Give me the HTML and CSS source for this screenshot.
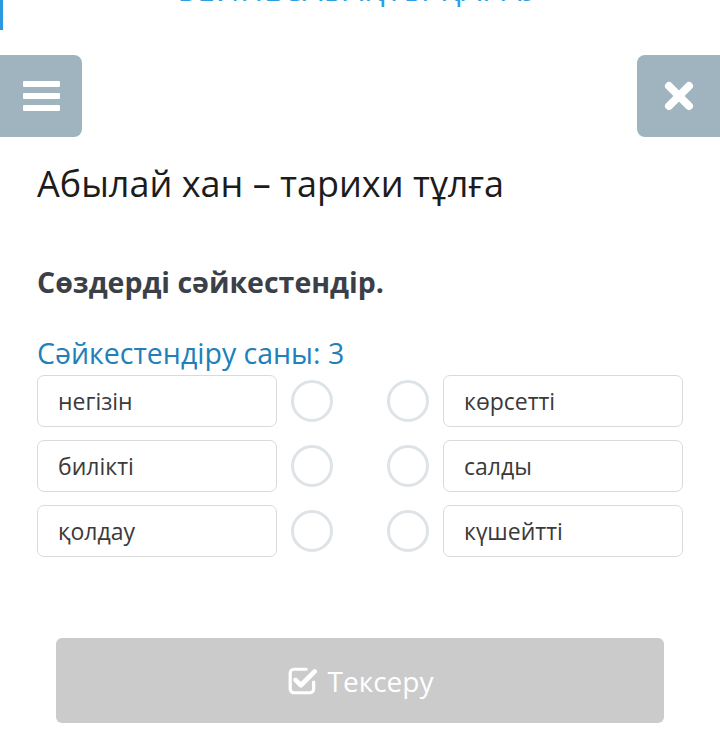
FILE: index.html
```html
<!DOCTYPE html>
<html lang="kk">
<head>
<meta charset="utf-8">
<title>Абылай хан – тарихи тұлға</title>
<link rel="stylesheet" href="styles.css">
</head>
<body>
<div class="peek">
  <div class="peek-bar"></div>
  <div class="peek-text">БЕЙНЕСАБАҚТЫ ҚАРАУ</div>
</div>
<div class="toolbar">
  <button class="tool-btn menu-btn" aria-label="Мәзір">
    <span class="bar"></span><span class="bar"></span><span class="bar"></span>
  </button>
  <button class="tool-btn close-btn" aria-label="Жабу">
    <svg width="32" height="32" viewBox="0 0 32 32"><path d="M6 6 L26 26 M26 6 L6 26" stroke="#fff" stroke-width="8" stroke-linecap="round"/></svg>
  </button>
</div>
<main class="content">
  <h1 class="title">Абылай хан – тарихи тұлға</h1>
  <h2 class="task">Сөздерді сәйкестендір.</h2>
  <div class="count">Сәйкестендіру саны: 3</div>
  <div class="match">
    <div class="word">негізін</div><span class="dot dot-l"></span><span class="dot dot-r"></span><div class="word">көрсетті</div>
    <div class="word">билікті</div><span class="dot dot-l"></span><span class="dot dot-r"></span><div class="word">салды</div>
    <div class="word">қолдау</div><span class="dot dot-l"></span><span class="dot dot-r"></span><div class="word">күшейтті</div>
  </div>
  <div class="actions">
    <button class="check-btn">
      <svg class="check-icon" width="32" height="30" viewBox="0 0 30 28"><path d="M18 3 H6.5 a3.5 3.5 0 0 0 -3.5 3.5 v15 a3.5 3.5 0 0 0 3.5 3.5 h15 a3.5 3.5 0 0 0 3.5 -3.5 v-6.5" fill="none" stroke="#fff" stroke-width="3" stroke-linecap="round"/><path d="M8 13 L13 18 L26 5" fill="none" stroke="#fff" stroke-width="4.4" stroke-linecap="round" stroke-linejoin="round"/></svg>
      <span>Тексеру</span>
    </button>
  </div>
</main>
</body>
</html>
```
FILE: styles.css
```css
* { box-sizing: border-box; }
html, body { margin: 0; padding: 0; background: #fff; }
body {
  font-family: "Open Sans", "Noto Sans", "DejaVu Sans", sans-serif;
  color: #222;
  width: 720px;
  overflow: hidden;
}
.peek {
  height: 12px;
  position: relative;
}
.peek-bar {
  position: absolute;
  left: 0;
  top: 0;
  width: 3px;
  height: 30px;
  background: #2a9ae0;
}
.peek-text {
  width: 100%;
  height: 9px;
  overflow: hidden;
  display: flex;
  justify-content: center;
  align-items: flex-end;
  font-size: 31px;
  line-height: 40px;
  letter-spacing: 1px;
  color: #2d9ee0;
}
.toolbar {
  margin-top: 43px;
  display: flex;
  justify-content: space-between;
  height: 82px;
}
.tool-btn {
  border: 0;
  padding: 0;
  background: #a0b4c0;
  height: 82px;
  display: flex;
  align-items: center;
  justify-content: center;
}
.menu-btn {
  width: 82px;
  border-radius: 0 8px 8px 0;
  flex-direction: column;
  gap: 6px;
}
.menu-btn .bar {
  display: block;
  width: 37px;
  height: 6px;
  border-radius: 1px;
  background: #fff;
}
.close-btn {
  width: 83px;
  border-radius: 8px 0 0 8px;
}
.content {
  padding: 0 37px;
}
.title {
  margin: 25px 0 0;
  font-size: 36px;
  line-height: 44px;
  font-weight: 400;
  color: #1c1c1c;
}
.task {
  margin: 57px 0 0;
  font-size: 28.5px;
  line-height: 38px;
  font-weight: 700;
  color: #3b4048;
}
.count {
  margin-top: 33px;
  font-size: 28.5px;
  line-height: 38px;
  color: #2180ba;
}
.match {
  margin-top: 3px;
  display: grid;
  grid-template-columns: 240px 1fr 1fr 240px;
  row-gap: 13px;
  align-items: center;
}
.word {
  height: 52px;
  border: 1.5px solid #dadada;
  border-radius: 7px;
  padding-left: 20px;
  display: flex;
  align-items: center;
  font-size: 23px;
  color: #3a3a3a;
}
.dot {
  width: 42px;
  height: 42px;
  border: 3px solid #dde3e7;
  border-radius: 50%;
}
.dot-l { justify-self: start; margin-left: 14px; }
.dot-r { justify-self: end; margin-right: 14px; }
.actions {
  margin-top: 81px;
  padding: 0 19px;
}
.check-btn {
  width: 100%;
  height: 85px;
  border: 0;
  border-radius: 6px;
  background: #cbcbcb;
  color: #fff;
  font-family: inherit;
  font-size: 28px;
  display: flex;
  align-items: center;
  justify-content: center;
  gap: 9px;
}
```
